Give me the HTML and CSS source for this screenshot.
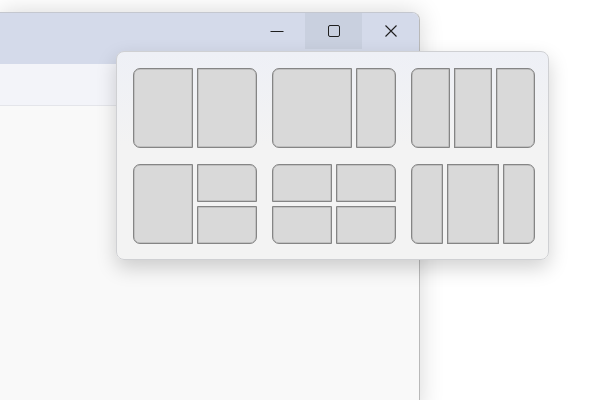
FILE: index.html
```html
<!DOCTYPE html>
<html lang="en">
<head>
    <meta charset="UTF-8">
    <title>Snap layouts</title>
    <link rel="stylesheet" href="styles.css">
</head>
<body>

<div class="window">
    <div class="titlebar">
        <div class="cap_btn">
            <svg width="14" height="14" viewBox="0 0 14 14"><path d="M0.5 7.5h13" stroke="#1f1f1f" stroke-width="1"/></svg>
        </div>
        <div class="cap_btn hover">
            <svg width="14" height="14" viewBox="0 0 14 14"><rect x="1.5" y="1.5" width="11" height="11" rx="1.5" fill="none" stroke="#1f1f1f" stroke-width="1"/></svg>
        </div>
        <div class="cap_btn">
            <svg width="14" height="14" viewBox="0 0 14 14"><path d="M1.5 1.5l11 11M12.5 1.5l-11 11" stroke="#1f1f1f" stroke-width="1.1"/></svg>
        </div>
    </div>
    <div class="toolbar"></div>
    <div class="content"></div>
</div>

<!-- snap layouts flyout -->
<div class="snap">
    <div class="layout halves">
        <div class="tile r_l"></div>
        <div class="tile r_r"></div>
    </div>
    <div class="layout two_one">
        <div class="tile r_l"></div>
        <div class="tile r_r"></div>
    </div>
    <div class="layout thirds">
        <div class="tile r_l"></div>
        <div class="tile"></div>
        <div class="tile r_r"></div>
    </div>
    <div class="layout main_stack">
        <div class="tile r_l tall"></div>
        <div class="tile r_tr"></div>
        <div class="tile r_br"></div>
    </div>
    <div class="layout quads">
        <div class="tile r_tl"></div>
        <div class="tile r_tr"></div>
        <div class="tile r_bl"></div>
        <div class="tile r_br"></div>
    </div>
    <div class="layout wide_center">
        <div class="tile r_l"></div>
        <div class="tile"></div>
        <div class="tile r_r"></div>
    </div>
</div>

</body>
</html>
```

FILE: styles.css
```css
body {
    margin: 0;
    background-color: #ffffff;
    font-family: "Segoe UI", "Noto Sans", sans-serif;
    height: 400px;
    overflow: hidden;
}
.window {
    margin-top: 12px;
    width: 420px;
    height: 400px;
    box-sizing: border-box;
    border-top: 1px solid #c4c7cf;
    border-right: 1px solid #b9b9b9;
    border-top-right-radius: 8px;
    background-color: #f9f9f9;
    box-shadow: 0 0 24px rgba(0, 0, 0, 0.16);
    overflow: hidden;
}
.titlebar {
    height: 51px;
    background-color: #d4daea;
    display: flex;
    justify-content: flex-end;
    align-items: flex-start;
}
.cap_btn {
    width: 57px;
    height: 36px;
    display: flex;
    align-items: center;
    justify-content: center;
}
.cap_btn.hover {
    background-color: #c9d0df;
}
.toolbar {
    height: 41px;
    background-color: #f3f4f9;
    border-bottom: 1px solid #e4e5ea;
}
.content {
    background-color: #f9f9f9;
}

.snap {
    position: absolute;
    left: 116px;
    top: 51px;
    width: 433px;
    box-sizing: border-box;
    padding: 16px 13px 15px 16px;
    border: 1px solid #cfd0d3;
    border-radius: 8px;
    background: linear-gradient(#eef0f6, #f3f3f3 45%);
    box-shadow: 0 8px 20px rgba(0, 0, 0, 0.18);
    display: grid;
    grid-template-columns: repeat(3, 124px);
    column-gap: 15px;
    row-gap: 16px;
}
.layout {
    display: grid;
    gap: 4px;
    height: 80px;
}
.halves {
    grid-template-columns: 1fr 1fr;
}
.two_one {
    grid-template-columns: 2fr 1fr;
}
.thirds {
    grid-template-columns: 1fr 1fr 1fr;
}
.main_stack {
    grid-template-columns: 1fr 1fr;
    grid-template-rows: 1fr 1fr;
}
.main_stack .tall {
    grid-row: span 2;
}
.quads {
    grid-template-columns: 1fr 1fr;
    grid-template-rows: 1fr 1fr;
}
.wide_center {
    grid-template-columns: 1fr 1.6fr 1fr;
}
.tile {
    background-color: #d9d9d9;
    border: 1px solid #858585;
    box-shadow: inset 0 0 0 0.5px #a8a8a8;
}
.r_l { border-radius: 7px 0 0 7px; }
.r_r { border-radius: 0 7px 7px 0; }
.r_tl { border-top-left-radius: 7px; }
.r_tr { border-top-right-radius: 7px; }
.r_bl { border-bottom-left-radius: 7px; }
.r_br { border-bottom-right-radius: 7px; }
```
